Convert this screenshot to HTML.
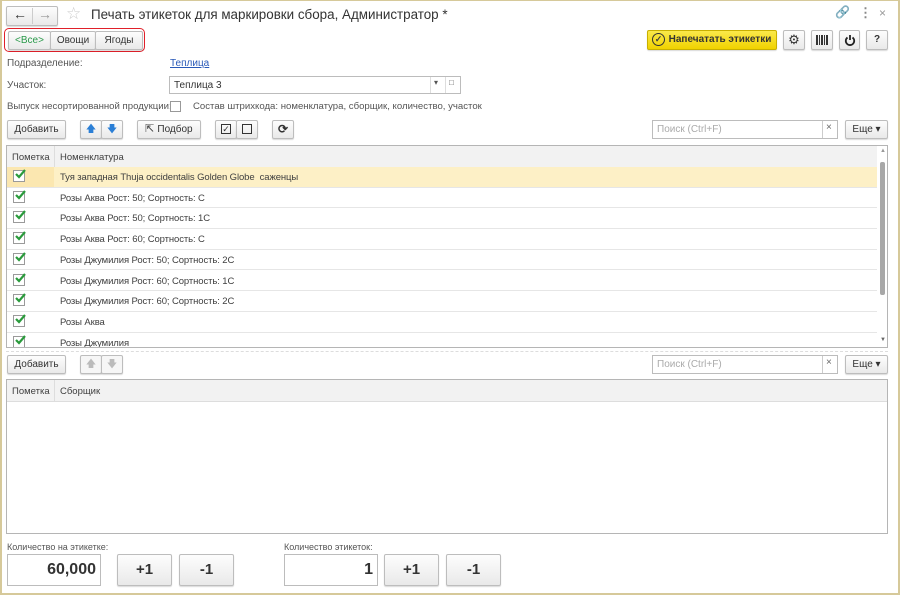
<!DOCTYPE html>
<html><head><meta charset="utf-8"><style>
*{box-sizing:border-box;margin:0;padding:0}
body{width:900px;height:595px;overflow:hidden;background:#fff;font-family:"Liberation Sans",sans-serif;font-size:10px;color:#404040;position:relative}
.frame{position:absolute;left:0;top:0;width:900px;height:595px;border:2px solid #d6c99a;border-top:1px solid #d6c99a}
.a{position:absolute;white-space:nowrap}
.btn{position:absolute;height:19px;border:1px solid #bdbdbd;border-radius:2px;background:linear-gradient(#fdfdfd,#e9e9e9);box-shadow:0 1px 1px rgba(0,0,0,.15);text-align:center;line-height:17px;color:#333;font-size:10px;white-space:nowrap}
.inp{position:absolute;border:1px solid #bcbcbc;background:#fff;height:19px;line-height:17px;padding-left:4px;white-space:nowrap}
.tbl{position:absolute;border:1px solid #b5b5b5;background:#fff}
.hdr{position:absolute;left:0;right:0;top:0;height:22px;background:#f2f2f2;border-bottom:1px solid #ddd}
.row{position:absolute;left:0;width:870px;height:20.7px;border-bottom:1px solid #e6e6e6;line-height:22px;font-size:9.5px;letter-spacing:-0.1px}
.cb{position:absolute;left:6px;top:3px;width:12px;height:12px;border:1px solid #9a9a9a;background:#fff}
.cb svg{position:absolute;left:0;top:-3px}
.t{position:absolute;left:53px;white-space:nowrap}
.gray{color:#555}
</style></head><body>
<div class="frame"></div>
<div class="btn" style="left:6px;top:6px;width:52px;height:20px;"></div>
<div class="a" style="left:32px;top:8px;width:1px;height:16px;background:#ccc"></div>
<div class="a" style="left:13px;top:6px;font-size:14px;color:#333">&#8592;</div>
<div class="a" style="left:38px;top:6px;font-size:14px;color:#999">&#8594;</div>
<div class="a" style="left:66px;top:4px;font-size:17px;color:#ccc">&#9734;</div>
<div class="a" style="left:91px;top:7px;font-size:13.4px;color:#333">Печать этикеток для маркировки сбора, Администратор *</div>
<div class="a" style="left:835px;top:5px;font-size:12px;color:#999">&#128279;</div>
<div class="a" style="left:859px;top:5px;font-size:13px;color:#888;font-weight:bold">&#8942;</div>
<div class="a" style="left:879px;top:6px;font-size:12px;color:#999">&#215;</div>
<div class="a" style="left:4px;top:28px;width:141px;height:24px;border:1.5px solid #e0202a;border-radius:5px"></div>
<div class="btn" style="left:8px;top:31px;width:43px;color:#2a9a4a">&lt;Все&gt;</div>
<div class="btn" style="left:50px;top:31px;width:46px">Овощи</div>
<div class="btn" style="left:95px;top:31px;width:48px">Ягоды</div>
<div class="btn" style="left:647px;top:30px;width:130px;height:20px;background:linear-gradient(#fbe94a,#f0d200);border-color:#c9b000;font-weight:bold;color:#333;padding-left:16px;line-height:18px">Напечатать этикетки</div>
<div class="a" style="left:652px;top:33px;width:13px;height:13px;border:1.3px solid #333;border-radius:50%;font-size:9px;line-height:11px;text-align:center;font-weight:bold">&#10003;</div>
<div class="btn" style="left:783px;top:30px;width:22px;height:20px;font-size:13px">&#9881;</div>
<div class="btn" style="left:811px;top:30px;width:22px;height:20px"><svg width="14" height="10" style="margin-top:4px"><rect x="1" y="0" width="2" height="10" fill="#333"/><rect x="4" y="0" width="1" height="10" fill="#333"/><rect x="6" y="0" width="2" height="10" fill="#333"/><rect x="9" y="0" width="1" height="10" fill="#333"/><rect x="11" y="0" width="2" height="10" fill="#333"/></svg></div>
<div class="btn" style="left:839px;top:30px;width:21px;height:20px"><svg width="12" height="12" style="margin-top:3px"><path d="M3.5 3.5 A4.2 4.2 0 1 0 8.5 3.5" stroke="#222" stroke-width="1.8" fill="none"/><path d="M6 1 V6" stroke="#222" stroke-width="1.8"/></svg></div>
<div class="btn" style="left:866px;top:30px;width:22px;height:20px;font-weight:bold;line-height:18px">?</div>
<div class="a gray" style="left:7px;top:58px">Подразделение:</div>
<div class="a" style="left:170px;top:58px;color:#2959b8;text-decoration:underline">Теплица</div>
<div class="a gray" style="left:7px;top:80px">Участок:</div>
<div class="inp" style="left:169px;top:76px;width:292px;height:18px;color:#333">Теплица 3</div>
<div class="a" style="left:430px;top:77px;width:1px;height:16px;background:#ddd"></div>
<div class="a" style="left:445px;top:77px;width:1px;height:16px;background:#ddd"></div>
<div class="a" style="left:434px;top:78px;font-size:8px;color:#555">&#9662;</div>
<div class="a" style="left:449px;top:78px;font-size:8px;color:#555">&#9633;</div>
<div class="a gray" style="left:7px;top:101px;font-size:9.6px">Выпуск несортированной продукции:</div>
<div class="a" style="left:170px;top:101px;width:11px;height:11px;border:1px solid #999;background:#fff"></div>
<div class="a gray" style="left:193px;top:101px;font-size:9.6px">Состав штрихкода: номенклатура, сборщик, количество, участок</div>
<div class="btn" style="left:7px;top:120px;width:59px">Добавить</div>
<div class="btn" style="left:80px;top:120px;width:22px;color:#2b7fd6">&#129093;</div>
<div class="btn" style="left:101px;top:120px;width:22px;color:#2b7fd6">&#129095;</div>
<div class="btn" style="left:137px;top:120px;width:64px;padding-left:12px">Подбор</div>
<div class="a" style="left:145px;top:122px;font-size:11px">&#8689;</div>
<div class="btn" style="left:215px;top:120px;width:22px"><span style="display:inline-block;width:10px;height:10px;border:1px solid #333;margin-top:3px;font-size:9px;line-height:8px">&#10003;</span></div>
<div class="btn" style="left:236px;top:120px;width:22px"><span style="display:inline-block;width:10px;height:10px;border:1px solid #333;margin-top:3px"></span></div>
<div class="btn" style="left:272px;top:120px;width:22px;font-size:12px;font-weight:bold">&#10227;</div>
<div class="inp" style="left:652px;top:120px;width:186px;color:#aaa">Поиск (Ctrl+F)</div>
<div class="a" style="left:822px;top:121px;width:1px;height:17px;background:#ccc"></div>
<div class="a" style="left:826px;top:122px;font-size:10px;color:#666">&#215;</div>
<div class="btn" style="left:845px;top:120px;width:43px">Еще &#9662;</div>
<div class="tbl" style="left:6px;top:145px;width:882px;height:203px;overflow:hidden">
<div class="hdr"><span class="a" style="left:5px;top:6px;font-size:9.5px">Пометка</span><span class="a" style="left:47px;top:0;width:1px;height:22px;background:#ddd"></span><span class="a" style="left:53px;top:6px;font-size:9.5px">Номенклатура</span></div>
<div class="row" style="top:21px;background:#fdf0c6"><div class="a" style="left:0;top:0;width:47px;height:20px;background:#fbe7b0"></div><div class="cb"><svg width="13" height="13"><path d="M2 6 L5 9 L11 2" stroke="#2a9b3c" stroke-width="2.2" fill="none"/></svg></div><span class="t">Туя западная Thuja occidentalis Golden Globe&nbsp; саженцы</span></div>
<div class="row" style="top:41.7px"><div class="cb"><svg width="13" height="13"><path d="M2 6 L5 9 L11 2" stroke="#2a9b3c" stroke-width="2.2" fill="none"/></svg></div><span class="t">Розы Аква Рост: 50; Сортность: С</span></div>
<div class="row" style="top:62.4px"><div class="cb"><svg width="13" height="13"><path d="M2 6 L5 9 L11 2" stroke="#2a9b3c" stroke-width="2.2" fill="none"/></svg></div><span class="t">Розы Аква Рост: 50; Сортность: 1С</span></div>
<div class="row" style="top:83.1px"><div class="cb"><svg width="13" height="13"><path d="M2 6 L5 9 L11 2" stroke="#2a9b3c" stroke-width="2.2" fill="none"/></svg></div><span class="t">Розы Аква Рост: 60; Сортность: С</span></div>
<div class="row" style="top:103.8px"><div class="cb"><svg width="13" height="13"><path d="M2 6 L5 9 L11 2" stroke="#2a9b3c" stroke-width="2.2" fill="none"/></svg></div><span class="t">Розы Джумилия Рост: 50; Сортность: 2С</span></div>
<div class="row" style="top:124.5px"><div class="cb"><svg width="13" height="13"><path d="M2 6 L5 9 L11 2" stroke="#2a9b3c" stroke-width="2.2" fill="none"/></svg></div><span class="t">Розы Джумилия Рост: 60; Сортность: 1С</span></div>
<div class="row" style="top:145.2px"><div class="cb"><svg width="13" height="13"><path d="M2 6 L5 9 L11 2" stroke="#2a9b3c" stroke-width="2.2" fill="none"/></svg></div><span class="t">Розы Джумилия Рост: 60; Сортность: 2С</span></div>
<div class="row" style="top:165.9px"><div class="cb"><svg width="13" height="13"><path d="M2 6 L5 9 L11 2" stroke="#2a9b3c" stroke-width="2.2" fill="none"/></svg></div><span class="t">Розы Аква</span></div>
<div class="row" style="top:186.6px"><div class="cb"><svg width="13" height="13"><path d="M2 6 L5 9 L11 2" stroke="#2a9b3c" stroke-width="2.2" fill="none"/></svg></div><span class="t">Розы Джумилия</span></div>
<div class="a" style="left:870px;top:0;width:11px;height:203px;background:#fff"></div>
<div class="a" style="left:873px;top:2px;font-size:6px;color:#999">&#9650;</div>
<div class="a" style="left:873px;top:191px;font-size:6px;color:#666">&#9660;</div>
<div class="a" style="left:873px;top:16px;width:5px;height:133px;background:#a8a8a8;border-radius:2px"></div>
</div>
<div class="a" style="left:6px;top:351px;width:882px;border-top:1px dashed #ddd"></div>
<div class="btn" style="left:7px;top:355px;width:59px">Добавить</div>
<div class="btn" style="left:80px;top:355px;width:22px;color:#bbb;background:#f6f6f6">&#129093;</div>
<div class="btn" style="left:101px;top:355px;width:22px;color:#bbb;background:#f6f6f6">&#129095;</div>
<div class="inp" style="left:652px;top:355px;width:186px;color:#aaa">Поиск (Ctrl+F)</div>
<div class="a" style="left:822px;top:356px;width:1px;height:17px;background:#ccc"></div>
<div class="a" style="left:826px;top:357px;font-size:10px;color:#666">&#215;</div>
<div class="btn" style="left:845px;top:355px;width:43px">Еще &#9662;</div>
<div class="tbl" style="left:6px;top:379px;width:882px;height:155px">
<div class="hdr"><span class="a" style="left:5px;top:6px;font-size:9.5px">Пометка</span><span class="a" style="left:47px;top:0;width:1px;height:22px;background:#ddd"></span><span class="a" style="left:53px;top:6px;font-size:9.5px">Сборщик</span></div>
</div>
<div class="a gray" style="left:7px;top:542px;font-size:9px">Количество на этикетке:</div>
<div class="inp" style="left:7px;top:554px;width:94px;height:32px;text-align:right;padding-right:4px;font-size:16px;font-weight:bold;line-height:30px;color:#333">60,000</div>
<div class="btn" style="left:117px;top:554px;width:55px;height:32px;line-height:30px;font-size:15px;font-weight:bold">+1</div>
<div class="btn" style="left:179px;top:554px;width:55px;height:32px;line-height:30px;font-size:15px;font-weight:bold">-1</div>
<div class="a gray" style="left:284px;top:542px;font-size:9px">Количество этикеток:</div>
<div class="inp" style="left:284px;top:554px;width:94px;height:32px;text-align:right;padding-right:4px;font-size:16px;font-weight:bold;line-height:30px;color:#333">1</div>
<div class="btn" style="left:384px;top:554px;width:55px;height:32px;line-height:30px;font-size:15px;font-weight:bold">+1</div>
<div class="btn" style="left:446px;top:554px;width:55px;height:32px;line-height:30px;font-size:15px;font-weight:bold">-1</div>
</body></html>
